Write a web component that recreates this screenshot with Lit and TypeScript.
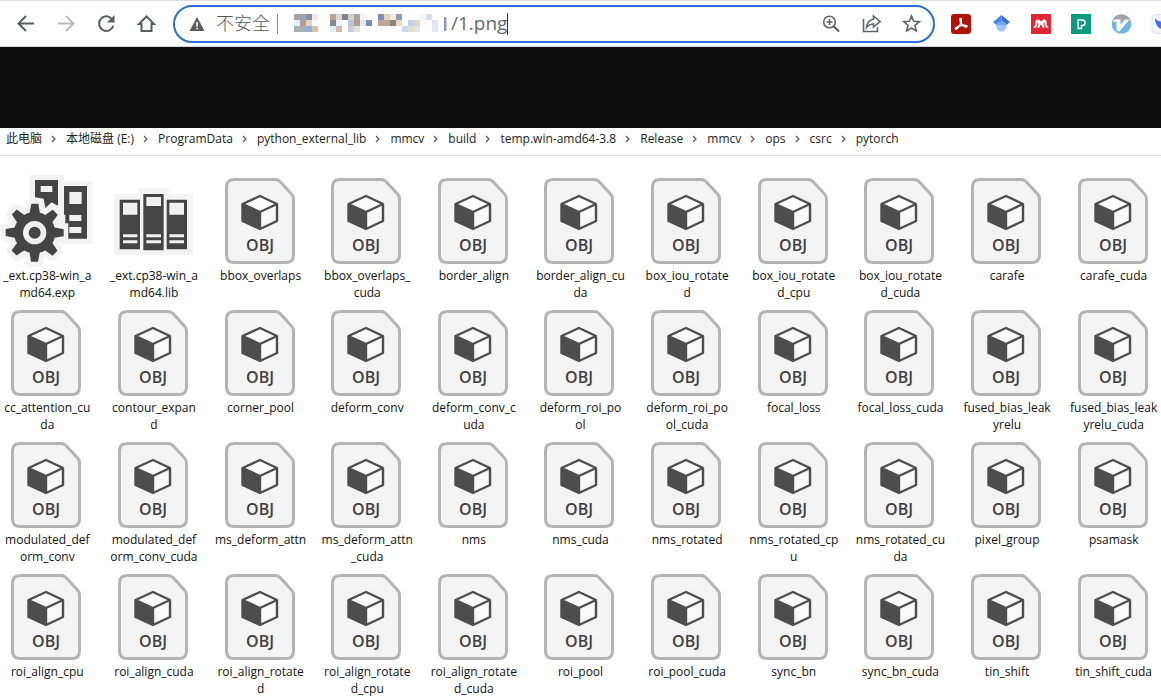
import { LitElement, html, svg, css } from "lit";
import { customElement, property } from "lit/decorators.js";

const PATH = [
  "此电脑", "本地磁盘 (E:)", "ProgramData", "python_external_lib", "mmcv", "build",
  "temp.win-amd64-3.8", "Release", "mmcv", "ops", "csrc", "pytorch",
];

// Each name is split where its label wraps.
const FILES: string[][] = [
  ["_ext.cp38-win_a", "md64.exp"], ["_ext.cp38-win_a", "md64.lib"], ["bbox_overlaps"],
  ["bbox_overlaps_", "cuda"], ["border_align"], ["border_align_cu", "da"],
  ["box_iou_rotate", "d"], ["box_iou_rotate", "d_cpu"], ["box_iou_rotate", "d_cuda"],
  ["carafe"], ["carafe_cuda"],
  ["cc_attention_cu", "da"], ["contour_expan", "d"], ["corner_pool"], ["deform_conv"],
  ["deform_conv_c", "uda"], ["deform_roi_po", "ol"], ["deform_roi_po", "ol_cuda"],
  ["focal_loss"], ["focal_loss_cuda"], ["fused_bias_leak", "yrelu"], ["fused_bias_leak", "yrelu_cuda"],
  ["modulated_def", "orm_conv"], ["modulated_def", "orm_conv_cuda"], ["ms_deform_attn"],
  ["ms_deform_attn", "_cuda"], ["nms"], ["nms_cuda"], ["nms_rotated"], ["nms_rotated_cp", "u"],
  ["nms_rotated_cu", "da"], ["pixel_group"], ["psamask"],
  ["roi_align_cpu"], ["roi_align_cuda"], ["roi_align_rotate", "d"], ["roi_align_rotate", "d_cpu"],
  ["roi_align_rotate", "d_cuda"], ["roi_pool"], ["roi_pool_cuda"], ["sync_bn"], ["sync_bn_cuda"],
  ["tin_shift"], ["tin_shift_cuda"],
];

// Blurred-out host name: x offset and the colours of three rows of blocks.
const MOSAIC: { x: number; rows: string[][] }[] = [
  { x: 0, rows: [
    ["#a3a4ad", "#a3a4ad", "#8791a8", "#f1e8e2"],
    ["#dff2fb", "#b89d94", "#e3d3c8", "#fdfdfe"],
    ["#a9adb5", "#a9adb5", "#8eb0d3", "#dcbfa6"]] },
  { x: 36, rows: [
    ["#b9a58d", "#dcd5cc", "#7f828b", "#d3cfcb", "#a9a5a4", "#fbf4e9", "#fff"],
    ["#858990", "#eef3f8", "#fff", "#b6c4d6", "#b39e8b", "#e4eaf2", "#7c90ab"],
    ["#e2ebf6", "#cfbba7", "#fff", "#cbd0d8", "#e7e2dd", "#fff", "#fff"]] },
  { x: 84, rows: [
    ["#7b8fb2", "#e9d3b4", "#f6ead8", "#8e9fb8", "#fff", "#fff", "#fff", "#f1f7fc", "#d4e0ee", "#fff"],
    ["#bda695", "#b9a79a", "#8a8681", "#ecdabd", "#fff", "#c2d2e8", "#e6d4c4", "#f8fafc", "#fff", "#e3e6f0"],
    ["#fff", "#fff", "#fff", "#fff", "#c6d9ec", "#eadac9", "#dce4f0", "#fff", "#fff", "#e3e6f0"]] },
];

const gearTeeth = [0, 45, 90, 135, 180, 225, 270, 315];

const gear = (extra: string) => svg`
  <g class=${extra}>
    <circle cx="104" cy="188" r="62"></circle>
    ${gearTeeth.map((a) => svg`<path d="M88 132L94 101H115L120 132Z" transform="rotate(${a} 104 188)"></path>`)}
  </g>`;

const expIcon = html`
  <svg class="icon" viewBox="0 24 276 258" width="92" height="86" aria-hidden="true">
    <path class="halo" d="M88 14H192V33H278V222H190L120 190L88 120Z"></path>
    ${gear("halo-gear")}
    <path class="ink" d="M105 30H174V107L155 97L136 114L131 86L105 82ZM192 48H261V206H205V160H196V134H192Z"></path>
    <path class="paper" d="M122 48H157V66H122ZM208 66H245V102H208ZM208 135H244V153H208ZM208 171H244V189H208Z"></path>
    ${gear("ink")}
    <circle class="paper" cx="104" cy="188" r="35"></circle>
    <circle class="ink" cx="104" cy="188" r="18"></circle>
  </svg>`;

const libIcon = html`
  <svg class="icon" viewBox="340 24 240 258" width="80" height="86" aria-hidden="true">
    <path class="halo" d="M343 71H415V54H508V71H580V255H343Z"></path>
    <path class="ink" d="M360 89H421V238H360ZM431 72H492V241H431ZM501 89H562V238H501Z"></path>
    <path class="paper" d="M370 98H413V134H370ZM440 81H484V108H440ZM509 98H553V134H509ZM370 193H413V202H370ZM440 193H484V202H440ZM509 193H553V202H509ZM370 211H413V220H370ZM440 211H484V220H440ZM509 211H553V220H509Z"></path>
  </svg>`;

const objIcon = html`
  <svg class="icon" viewBox="0 0 70 86" width="70" height="86" aria-hidden="true">
    <path class="sheet" d="M8 1.5H50Q53 1.5 55 3.5L66.500 16Q68.500 18 68.500 21V77Q68.500 84.500 61 84.500H9Q1.500 84.500 1.500 77V9Q1.500 1.500 9 1.500Z"></path>
    <path class="white" d="M35 18L52 26V43L35 51L17 43V26Z"></path>
    <path class="cube" d="M17 26L35 34V51L17 43Z"></path>
    <path class="edge" d="M35 18L52 26V43L35 51L17.500 43V26ZM17.500 26L35 34L52 26M35 34V51"></path>
    <text class="tag" x="35" y="73" text-anchor="middle">OBJ</text>
  </svg>`;

@customElement("nav-bar")
export class NavBar extends LitElement {
  static styles = css`
    :host { display: block; }
    .bar {
      display: flex; align-items: center; box-sizing: border-box; height: 47px;
      border-top: 1px solid #dedee2; border-bottom: 1px solid #d6d6d8;
      background: #fff; overflow: hidden;
    }
    button { appearance: none; border: 0; padding: 0; margin: 0; background: none; display: block; width: 20px; height: 20px; flex: none; }
    svg { display: block; }
    .nav { display: flex; gap: 20px; padding: 0 17px 0 16px; flex: none; }
    .line { fill: none; stroke: #5a5d61; stroke-width: 2; }
    .thin { fill: none; stroke: #5f6368; stroke-width: 1.6; }
    .off { stroke: #b9bbbd; }
    .solid { fill: #5a5d61; }
    .pill {
      flex: 1; min-width: 0; display: flex; align-items: center; box-sizing: border-box;
      height: 38px; border: 2px solid #2a6fd6; border-radius: 19px; padding: 0 12px 0 14px;
    }
    .unsafe { font: 300 18px/24px "Noto Sans CJK SC", sans-serif; color: #55585c; margin-left: 11px; padding-bottom: 3px; flex: none; }
    .rule { width: 1px; height: 20px; background: #85888b; margin: 0 16px 0 7px; flex: none; }
    .host { flex: none; }
    .url {
      border: 0; outline: 0; padding: 0 0 2px; margin: 0 0 0 3px; background: none; width: 56px; height: 28px;
      font: 400 19px/28px "Open Sans", sans-serif; color: #66696d;
    }
    .caret { width: 1px; height: 22px; background: #333; flex: none; }
    .actions { display: flex; gap: 20px; margin-left: auto; flex: none; }
    .ext { display: flex; gap: 20px; width: 226px; box-sizing: border-box; padding-left: 16px; flex: none; overflow: hidden; }
  `;

  render() {
    return html`
      <header class="bar">
        <nav class="nav">
          <button aria-label="Back"><svg width="20" height="20" viewBox="0 0 20 20"><path class="line" d="M18 9.500H3.500M10 2L2.500 9.500L10 17"></path></svg></button>
          <button aria-label="Forward"><svg width="20" height="20" viewBox="0 0 20 20"><path class="line off" d="M2 9.500H16.500M10 2L17.500 9.500L10 17"></path></svg></button>
          <button aria-label="Reload"><svg width="20" height="20" viewBox="0 0 20 20"><path class="line" d="M17.300 11.800A7.300 7.300 0 1 1 15.600 4.600"></path><path class="solid" d="M18.500 1V8.500H11Z"></path></svg></button>
          <button aria-label="Home"><svg width="20" height="20" viewBox="0 0 20 20"><path class="line" d="M3 10H5.500V17H15.500V10H18L10.500 2.500Z"></path></svg></button>
        </nav>
        <div class="pill">
          <svg width="16" height="16" viewBox="0 0 16 16"><path class="solid" fill-rule="evenodd" d="M8 1L15.500 15H0.500ZM7.200 6V10.500H8.800V6ZM7.200 11.700V13.300H8.800V11.700Z"></path></svg>
          <label class="unsafe" for="url">不安全</label>
          <span class="rule"></span>
          <svg class="host" width="154" height="20" viewBox="0 0 154 20" aria-hidden="true">
            ${MOSAIC.map((m) => m.rows.map((row, y) => row.map((c, x) =>
              svg`<rect x=${m.x + x * 6} y=${y * 6} width="6" height="6" fill=${c}></rect>`)))}
            <rect x="150" y="3" width="2" height="14" fill="#7d9dbd"></rect>
            <rect x="152" y="3" width="1" height="14" fill="#c3d8ec"></rect>
          </svg>
          <input class="url" id="url" type="text" value="/1.png" spellcheck="false" />
          <span class="caret"></span>
          <div class="actions">
            <button aria-label="Zoom"><svg width="20" height="20" viewBox="0 0 20 20"><circle class="thin" cx="8.500" cy="8" r="5.800"></circle><path class="thin" d="M8.500 5V11M5.500 8H11.500"></path><path class="line" d="M12.700 12.200L18 17.500"></path></svg></button>
            <button aria-label="Share"><svg width="20" height="20" viewBox="0 0 20 20"><path class="thin" d="M2.500 5V17.500H16.500V13"></path><path class="thin" d="M12.500 2L19 7.500L12.500 13V10C9.500 10 7.500 11 5.500 13.500C6 9 8.500 5.800 12.500 5.200Z"></path></svg></button>
            <button aria-label="Bookmark"><svg width="20" height="20" viewBox="0 0 20 20"><path class="thin" d="M10.500 2L12.700 7.200L18.300 7.700L14 11.400L15.300 16.900L10.500 14L5.700 16.900L7 11.400L2.700 7.700L8.300 7.200Z"></path></svg></button>
          </div>
        </div>
        <div class="ext">
          <button aria-label="PDF"><svg width="20" height="20" viewBox="0 0 20 20"><rect width="20" height="20" rx="3" fill="#b11209"></rect><path fill="none" stroke="#fff" stroke-width="1.500" stroke-linejoin="round" d="M9.500 4.500C8.500 4.500 9 7.500 10.500 9.700C12 12 15.500 14 16 12.500C16.300 11 12 10.800 9 11.800C6 12.700 3.800 14 4.500 15C5.500 16 8.500 12 9.800 9C10.700 6.800 10.500 4.500 9.500 4.500Z"></path></svg></button>
          <button aria-label="Scholar"><svg width="20" height="20" viewBox="0 0 20 20"><circle cx="10.500" cy="12.200" r="5.200" fill="#a0c3ff"></circle><path fill="#3f6fc9" d="M10.500 1L19 8L15.500 11C14.500 8.500 12.500 7.500 10.500 7.500Z"></path><path fill="#4a83ea" d="M10.500 1L2 8L5.500 11C6.500 8.500 8.500 7.500 10.500 7.500Z"></path><path fill="#76a7fa" d="M5.500 11C6 9 8 7.500 10.500 7.500S15 9 15.500 11Z"></path></svg></button>
          <button aria-label="Library"><svg width="20" height="20" viewBox="0 0 20 20"><rect width="20" height="20" fill="#e02637"></rect><path fill="none" stroke="#fff" stroke-width="1.800" stroke-linecap="round" d="M3.500 13C5.500 13 5.500 11 5.500 9.500M16.500 13C14.500 13 14.500 11 14.500 9.500M7.500 13C8.500 12 8.500 10.500 8.300 9M12.500 13C11.500 12 11.500 10.500 11.700 9"></path><path fill="#fff" d="M4.500 10C4 7.500 5 5.500 7 5.500C8.500 5.500 9 6.500 10 7.500C11 6.500 11.500 5.500 13 5.500C15 5.500 16 7.500 15.500 10L13.500 8.500L12 9.500L10 11.500L8 9.500L6.500 8.500Z"></path></svg></button>
          <button aria-label="Paperpile"><svg width="20" height="20" viewBox="0 0 20 20"><rect width="20" height="20" fill="#0d9c7d"></rect><path fill="none" stroke="#fff" stroke-width="1.500" d="M7 11V6H11.500C14.800 6 14.800 11.500 11.500 11.500H10.500V14.500H7.200V10"></path></svg></button>
          <button aria-label="Vim"><svg width="20" height="20" viewBox="0 0 20 20"><circle cx="10.500" cy="10" r="9.800" fill="#6fb5e0"></circle><path fill="#a2a4a5" d="M1 8A9.800 9.800 0 0 1 20 8Z"></path><path fill="#fff" d="M3 5.500H9.500V10.500L14 5.500H18.500L8.500 17.500L5.500 16.500V7.500L2 8Z"></path></svg></button>
          <button aria-label="Bird"><svg width="20" height="20" viewBox="0 0 20 20"><rect x="1" y="0.500" width="19" height="19" rx="3" fill="#f3f6ff" stroke="#dfe4f2"></rect><path fill="#4e6ef2" d="M4 4C6 7 8 7.500 12 7.500V15C7 15 4 10 4 4Z"></path></svg></button>
        </div>
      </header>
    `;
  }
}

@customElement("file-tile")
export class FileTile extends LitElement {
  @property({ attribute: false }) lines: string[] = [];

  static styles = css`
    :host { display: block; min-width: 0; }
    .tile { display: flex; flex-direction: column; align-items: center; gap: 3px; margin: 0; }
    .icon { display: block; overflow: visible; flex: none; }
    .name {
      font: 400 12px/17px "Open Sans", "Noto Sans", sans-serif; color: #111;
      text-align: center; white-space: nowrap; min-height: 35px; padding-left: 2px;
    }
    .halo { fill: #f3f3f3; }
    .halo-gear { fill: #f3f3f3; stroke: #f3f3f3; stroke-width: 32; stroke-linejoin: round; }
    .ink { fill: #444; }
    .paper { fill: #f0f0f0; }
    .sheet { fill: #f4f4f4; stroke: #b4b4b4; stroke-width: 3; }
    .white { fill: #fafafa; }
    .cube { fill: #4d4d4d; }
    .edge { fill: none; stroke: #4d4d4d; stroke-width: 2.4; stroke-linejoin: round; }
    .tag { font: 600 16px "Open Sans", sans-serif; fill: #404040; }
  `;

  render() {
    const name = this.lines.join("");
    const icon = name.endsWith(".exp") ? expIcon : name.endsWith(".lib") ? libIcon : objIcon;
    return html`
      <figure class="tile">
        ${icon}
        <figcaption class="name">${this.lines.map((l, i) => (i ? html`<br />${l}` : l))}</figcaption>
      </figure>
    `;
  }
}

@customElement("app-root")
export class AppRoot extends LitElement {
  static styles = css`
    :host { display: block; background: #fff; overflow: hidden; min-height: 100vh; }
    .band { height: 81px; background: #0d0d0d; }
    .path {
      display: flex; align-items: center; box-sizing: border-box; height: 28px; margin: 0;
      padding: 0 6px 6px; border-bottom: 1px solid #dcdcdc; list-style: none;
      font: 400 12px/20px "Open Sans", "Noto Sans CJK SC", sans-serif; color: #222; white-space: nowrap;
    }
    .step { display: flex; align-items: center; }
    .sep { display: block; margin: 0 9px; fill: none; stroke: #555; stroke-width: 1.2; }
    .files {
      display: grid; grid-template-columns: repeat(11, minmax(0, 1fr));
      gap: 8px 14px; padding: 22px 2px 0 0; margin: 0;
    }
  `;

  render() {
    return html`
      <nav-bar></nav-bar>
      <main>
        <div class="band"></div>
        <ol class="path">
          ${PATH.map((p, i) => html`
            <li class="step">
              ${i ? html`<svg class="sep" width="6" height="8" viewBox="0 0 6 8"><path d="M1 1L4 4L1 7"></path></svg>` : ""}<span>${p}</span>
            </li>`)}
        </ol>
        <section class="files">
          ${FILES.map((f) => html`<file-tile .lines=${f}></file-tile>`)}
        </section>
      </main>
    `;
  }
}
